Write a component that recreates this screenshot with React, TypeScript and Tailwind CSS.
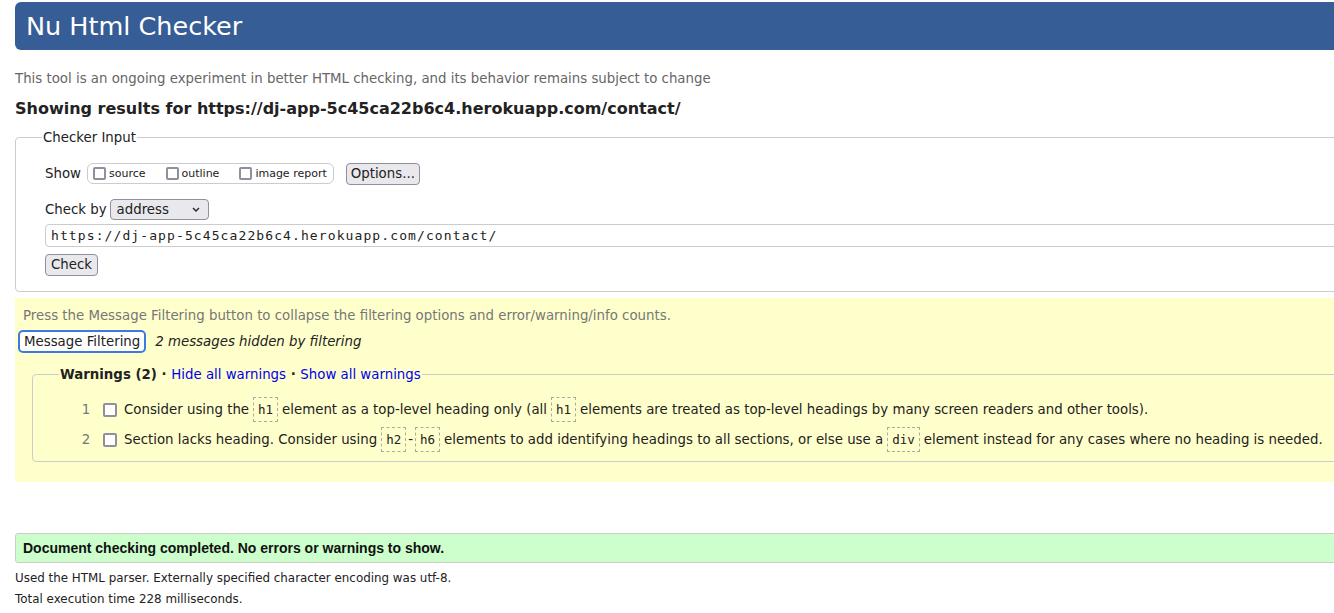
import React from 'react';

const dejavu = { fontFamily: '"DejaVu Sans", Verdana, sans-serif' };

function Box({ big }: { big?: boolean }) {
  return (
    <span
      className={`inline-block border-2 border-[#8f8f9d] rounded-[2px] bg-white shrink-0 align-middle ${
        big ? 'w-[14px] h-[14px]' : 'w-[13px] h-[13px]'
      }`}
    />
  );
}

function Code({ children }: { children: React.ReactNode }) {
  return (
    <span className="inline-flex items-center h-[25px] px-[4px] border border-dashed border-[#aaa] text-[12.5px] font-['DejaVu_Sans_Mono',monospace] text-[#222] mx-[2px]">
      {children}
    </span>
  );
}

export default function App() {
  return (
    <div className="w-[1334px] h-[613px] overflow-hidden bg-white text-[#222] text-[13.33px]" style={dejavu}>
      <div className="w-[1400px] pl-[15px]">
        {/* header */}
        <div className="mt-[2px] h-[48px] bg-[#365d95] rounded-l-[6px] flex items-center pl-[11px]">
          <h1 className="text-[25.5px] text-white leading-none font-normal pt-[2px]">Nu Html Checker</h1>
        </div>

        <p className="mt-[19px] text-[13.33px] text-[#666] leading-[20px]">
          This tool is an ongoing experiment in better HTML checking, and its behavior remains subject to change
        </p>
        <h2 className="mt-[9px] text-[16px] font-bold leading-[22px] text-[#222]">
          Showing results for https://dj-app-5c45ca22b6c4.herokuapp.com/contact/
        </h2>

        {/* checker input */}
        <fieldset className="mt-[7px] border border-[#ccc] rounded-[4px] pl-[29px] h-[165px]">
          <legend className="-ml-[3px] px-[1px] text-[#222] pt-[1px]">Checker Input</legend>
          <div className="flex items-center h-[22px] mt-[15px]">
            <span className="mr-[6px]">Show</span>
            <div className="flex items-center h-[21px] border border-[#ccc] rounded-[6px] pl-[5px] pr-[6px] gap-[3px]">
              <Box /><span className="text-[11px] mr-[17px]">source</span>
              <Box /><span className="text-[11px] mr-[17px]">outline</span>
              <Box /><span className="text-[11px]">image report</span>
            </div>
            <button className="ml-[12px] h-[22px] px-[4px] bg-[#e9e9ed] border border-[#8f8f9d] rounded-[4px] text-[13.33px] text-[#222]">
              Options...
            </button>
          </div>
          <div className="flex items-center h-[22px] mt-[14px]">
            <span className="mr-[3px]">Check by</span>
            <div className="flex items-center justify-between w-[99px] h-[21px] bg-[#e9e9ed] border border-[#8f8f9d] rounded-[4px] pl-[6px] pr-[6px]">
              <span>address</span>
              <svg width="10" height="7" viewBox="0 0 10 7" className="mr-[1px]">
                <path d="M2 2 L5 5 L8 2" fill="none" stroke="#222" strokeWidth="1.4" />
              </svg>
            </div>
          </div>
          <div className="mt-[3px] h-[23px] border border-[#ccc] rounded-[4px] flex items-center pl-[5px]">
            <span className="text-[13px] tracking-[1.1px] font-['DejaVu_Sans_Mono',monospace]">https://dj-app-5c45ca22b6c4.herokuapp.com/contact/</span>
          </div>
          <button className="mt-[7px] h-[22px] w-[53px] bg-[#e9e9ed] border border-[#8f8f9d] rounded-[4px] text-[13.33px] text-[#222]">
            Check
          </button>
        </fieldset>

        {/* filtering */}
        <div className="mt-[6px] h-[184px] bg-[#ffffcc] pl-[3px] pt-[8px]">
          <p className="pl-[5px] text-[#777] leading-[20px]">
            Press the Message Filtering button to collapse the filtering options and error/warning/info counts.
          </p>
          <div className="mt-[4px] flex items-center">
            <button className="h-[23px] px-[4px] bg-white border-2 border-[#3b7ae0] rounded-[5px] text-[13.33px] text-[#222] leading-none">
              Message Filtering
            </button>
            <span className="ml-[9px] italic text-[#222]">2 messages hidden by filtering</span>
          </div>
          <fieldset className="mt-[12px] ml-[14px] border border-[#ccc] rounded-[4px] h-[97px] pl-[48px]">
            <legend className="px-[1px] -ml-[22px]">
              <span className="font-bold">Warnings (2)</span>
              <span className="font-bold"> · </span>
              <a className="text-[#0000ee]">Hide all warnings</a>
              <span className="font-bold"> · </span>
              <a className="text-[#0000ee]">Show all warnings</a>
            </legend>
            <div className="mt-[10px] flex items-center h-[30px]">
              <span className="w-[10px] text-center text-[#777]">1</span>
              <span className="ml-[12px] flex items-center"><Box big /></span>
              <span className="ml-[7px]">Consider using the</span>
              <span className="ml-[2px]"><Code>h1</Code></span>
              <span className="ml-[2px]">element as a top-level heading only (all</span>
              <span className="ml-[2px]"><Code>h1</Code></span>
              <span className="ml-[2px]">elements are treated as top-level headings by many screen readers and other tools).</span>
            </div>
            <div className="flex items-center h-[30px]">
              <span className="w-[10px] text-center text-[#777]">2</span>
              <span className="ml-[12px] flex items-center"><Box big /></span>
              <span className="ml-[7px]">Section lacks heading. Consider using</span>
              <span className="ml-[2px]"><Code>h2</Code></span>
              <span>-</span>
              <Code>h6</Code>
              <span className="ml-[2px]">elements to add identifying headings to all sections, or else use a</span>
              <span className="ml-[2px]"><Code>div</Code></span>
              <span className="ml-[2px]">element instead for any cases where no heading is needed.</span>
            </div>
          </fieldset>
        </div>

        {/* result */}
        <div className="mt-[51px] h-[30px] bg-[#ccffcc] border border-[#ccc] rounded-l-[3px] flex items-center pl-[7px]">
          <span className="text-[14px] font-bold text-[#111] font-['Liberation_Sans',Arial,sans-serif]">
            Document checking completed. No errors or warnings to show.
          </span>
        </div>
        <p className="mt-[5px] text-[11.9px] leading-[21px]">Used the HTML parser. Externally specified character encoding was utf-8.</p>
        <p className="text-[11.9px] leading-[21px]">Total execution time 228 milliseconds.</p>
      </div>
    </div>
  );
}
